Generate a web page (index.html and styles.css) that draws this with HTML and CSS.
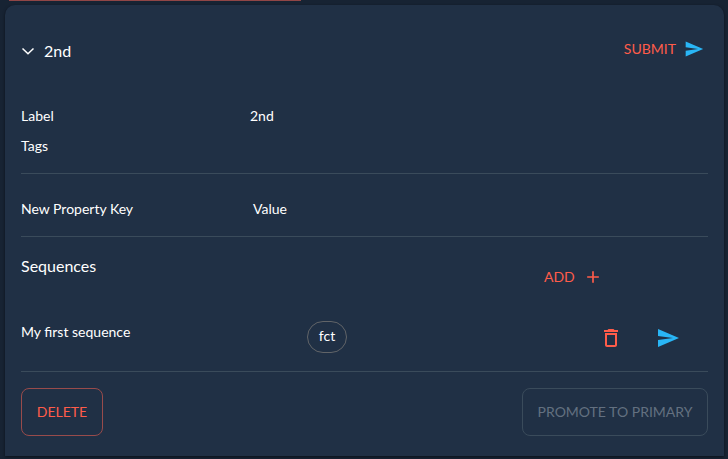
FILE: index.html
```html
<!DOCTYPE html>
<html lang="en">
<head>
<meta charset="utf-8">
<title>2nd</title>
<link rel="stylesheet" href="styles.css">
</head>
<body>
<div class="previous-edge"></div>
<main class="card">
  <header class="header">
    <h2 class="title">
      <svg class="chevron" viewBox="0 0 24 24"><path d="m6.500 9.500 5.500 5.300 5.500-5.300"/></svg>
      <span>2nd</span>
    </h2>
    <button class="text-button submit"><span>SUBMIT</span>
      <svg class="send small" viewBox="0 0 24 24"><path d="M2.01 21 23 12 2.01 3 2 10l15 2-15 2z"/></svg>
    </button>
  </header>
  <section class="details">
    <div class="field"><span class="key">Label</span><span>2nd</span></div>
    <div class="field"><span class="key">Tags</span></div>
  </section>
  <section class="new-property">
    <span class="key">New Property Key</span><span>Value</span>
  </section>
  <section class="sequences">
    <div class="sequences-head">
      <h3 class="subtitle">Sequences</h3>
      <button class="text-button add"><span>ADD</span>
        <svg class="plus" viewBox="0 0 24 24"><path d="M19 13h-6v6h-2v-6H5v-2h6V5h2v6h6z"/></svg>
      </button>
    </div>
    <div class="sequence">
      <span class="name">My first sequence</span>
      <span class="chip">fct</span>
      <svg class="trash" viewBox="0 0 24 24"><path d="M6 19c0 1.100.9 2 2 2h8c1.100 0 2-.9 2-2V7H6zM8 9h8v10H8zm7.500-5-1-1h-5l-1 1H5v2h14V4z"/></svg>
      <svg class="send" viewBox="0 0 24 24"><path d="M2.010 21 23 12 2.010 3 2 10l15 2-15 2z"/></svg>
    </div>
  </section>
  <footer class="actions">
    <button class="outlined delete">DELETE</button>
    <button class="outlined promote" disabled>PROMOTE TO PRIMARY</button>
  </footer>
</main>
</body>
</html>
```
FILE: styles.css
```css
* { box-sizing: border-box; }
body {
  margin: 0;
  height: 459px;
  overflow: hidden;
  background: #172333;
  color: #fff;
  font: 14px/20px Lato, sans-serif;
}
.previous-edge {
  width: 292px;
  height: 1px;
  margin-left: 9px;
  background: #914646;
}
.card {
  width: 719px;
  height: 451px;
  margin: 4px 0 0 5px;
  padding: 0 16px;
  background: #203045;
  border-radius: 10px 10px 0 0;
  box-shadow: 0 1px 3px rgba(0, 0, 0, .5);
}
h2, h3 { margin: 0; font-weight: 400; font-size: 16px; line-height: 24px; }
svg { display: block; flex: none; fill: currentColor; }
button { font: inherit; background: none; border: 0; padding: 0; }
.header {
  display: flex;
  justify-content: space-between;
  height: 96px;
  padding: 32px 4px 0 0;
}
.title { display: flex; align-items: center; height: 28px; gap: 7px; }
.chevron {
  width: 24px;
  height: 24px;
  margin: 0 -3px 0 -5px;
  fill: none;
  stroke: currentColor;
  stroke-width: 1.5;
}
.text-button { display: flex; align-items: center; color: #ff5c4a; }
.submit { height: 24px; gap: 8px; }
.send { width: 24px; height: 24px; color: #29b6f6; }
.send.small { width: 20px; height: 20px; }
.details { height: 73px; padding-top: 5px; border-bottom: 1px solid #3a4b5b; }
.field { display: flex; height: 30px; }
.key { width: 229px; }
.new-property {
  display: flex;
  height: 63px;
  padding-top: 25px;
  border-bottom: 1px solid #3a4b5b;
}
.new-property .key { width: 232px; }
.sequences { height: 135px; border-bottom: 1px solid #3a4b5b; }
.sequences-head { display: flex; height: 84px; padding-top: 17px; }
.subtitle { width: 523px; }
.add { height: 46px; gap: 8px; }
.plus { width: 20px; height: 20px; }
.sequence { display: flex; height: 34px; align-items: flex-start; }
.name { width: 286px; padding-top: 1px; }
.chip {
  width: 40px;
  height: 32px;
  border: 1px solid #616468;
  border-radius: 16px;
  line-height: 28px;
  text-align: center;
}
.trash { width: 24px; height: 24px; margin: 5px 0 0 252px; color: #ff5c4a; }
.sequence .send { margin: 5px 0 0 33px; }
.actions { display: flex; justify-content: space-between; padding-top: 16px; }
.outlined { height: 48px; border: 1px solid; border-radius: 8px; text-align: center; }
.delete { width: 82px; color: #ff5c4a; border-color: #984b4b; }
.promote { width: 186px; color: #637080; border-color: #3a4b5b; }
```
